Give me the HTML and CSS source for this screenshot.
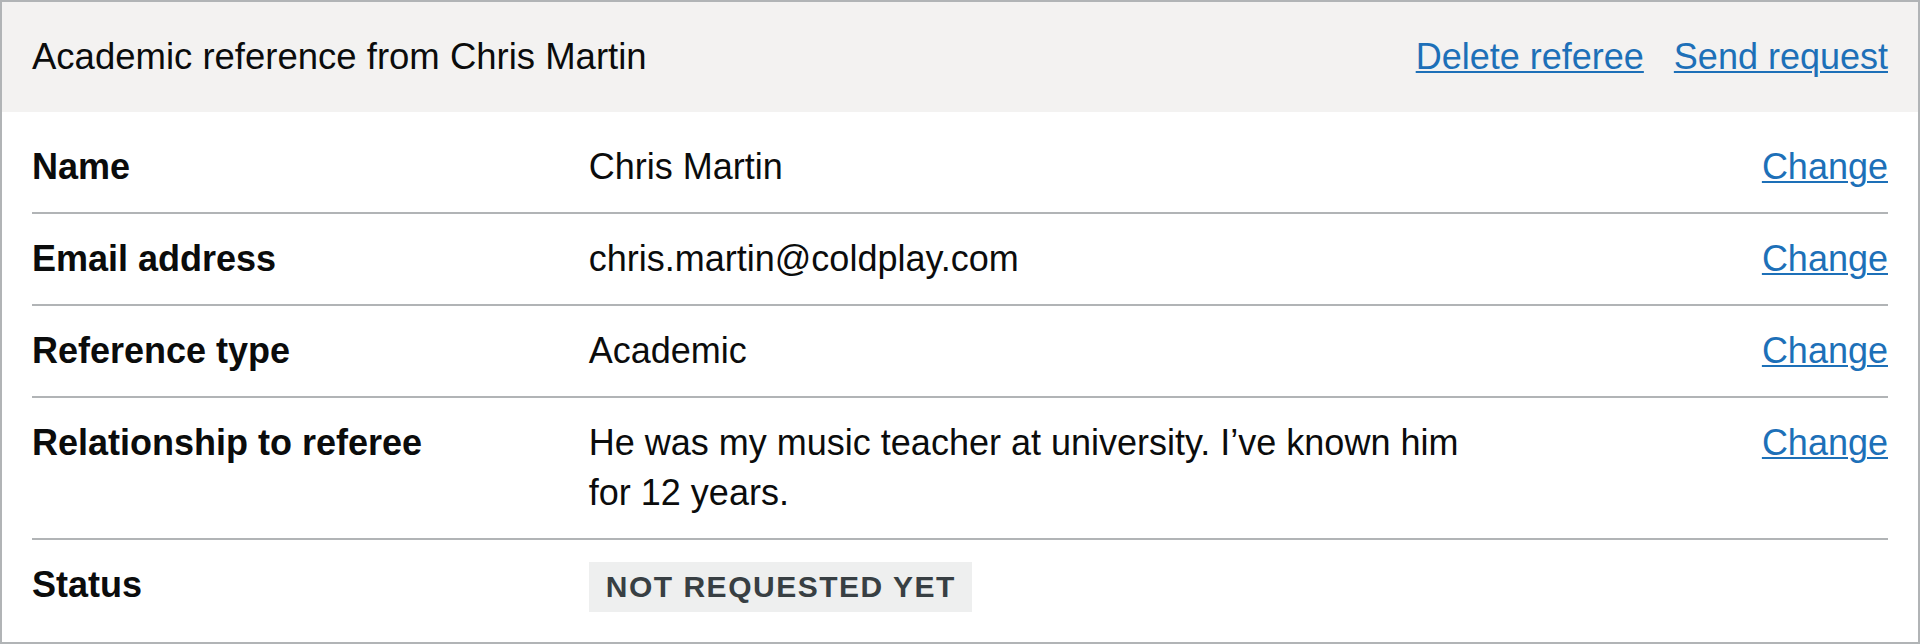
FILE: index.html
```html
<!DOCTYPE html>
<html lang="en">
<head>
<meta charset="utf-8">
<title>Academic reference from Chris Martin</title>
<link rel="stylesheet" href="styles.css">
</head>
<body>
<div class="card">
  <div class="card-header">
    <h2 class="card-title">Academic reference from Chris Martin</h2>
    <ul class="card-actions">
      <li><a class="link" href="#">Delete referee</a></li>
      <li><a class="link" href="#">Send request</a></li>
    </ul>
  </div>
  <div class="card-content">
    <dl class="summary-list">
      <div class="row">
        <dt class="key">Name</dt>
        <dd class="value">Chris Martin</dd>
        <dd class="actions"><a class="link" href="#">Change</a></dd>
      </div>
      <div class="row">
        <dt class="key">Email address</dt>
        <dd class="value">chris.martin@coldplay.com</dd>
        <dd class="actions"><a class="link" href="#">Change</a></dd>
      </div>
      <div class="row">
        <dt class="key">Reference type</dt>
        <dd class="value">Academic</dd>
        <dd class="actions"><a class="link" href="#">Change</a></dd>
      </div>
      <div class="row">
        <dt class="key">Relationship to referee</dt>
        <dd class="value">He was my music teacher at university. I’ve known him for 12 years.</dd>
        <dd class="actions"><a class="link" href="#">Change</a></dd>
      </div>
      <div class="row row-last">
        <dt class="key">Status</dt>
        <dd class="value"><strong class="tag">Not requested yet</strong></dd>
      </div>
    </dl>
  </div>
</div>
</body>
</html>
```
FILE: styles.css
```css
* {
  box-sizing: border-box;
}

html, body {
  margin: 0;
  padding: 0;
  background: #ffffff;
}

body {
  font-family: "Liberation Sans", Arial, sans-serif;
  font-size: 36px;
  line-height: 50px;
  color: #0b0c0c;
}

.card {
  border: 2px solid #b1b4b6;
  height: 644px;
}

.card-header {
  display: flex;
  justify-content: space-between;
  align-items: center;
  background: #f3f2f1;
  padding: 30px;
  height: 110px;
}

.card-title {
  margin: 0;
  font-size: 36.5px;
  font-weight: 400;
  line-height: 50px;
}

.card-actions {
  display: flex;
  gap: 30px;
  list-style: none;
  margin: 0;
  padding: 0;
}

.link {
  color: #1d70b8;
  text-decoration: underline;
  text-decoration-thickness: 2px;
  text-underline-offset: 2px;
}

.card-content {
  padding: 10px 30px 10px;
}

.summary-list {
  margin: 0;
}

.row {
  display: grid;
  grid-template-columns: 30% 50% 20%;
  border-bottom: 2px solid #b1b4b6;
}

.row-last {
  border-bottom: none;
}

.key,
.value,
.actions {
  margin: 0;
  padding: 20px 40px 20px 0;
}

.key {
  font-weight: 700;
}

.actions {
  padding-right: 0;
  text-align: right;
}

.tag {
  display: inline-block;
  vertical-align: top;
  margin-top: 2px;
  padding: 10px 16px 10px 17px;
  background: #eeefef;
  color: #383f43;
  font-size: 30px;
  line-height: 30px;
  font-weight: 700;
  letter-spacing: 1.5px;
  text-transform: uppercase;
}
```
